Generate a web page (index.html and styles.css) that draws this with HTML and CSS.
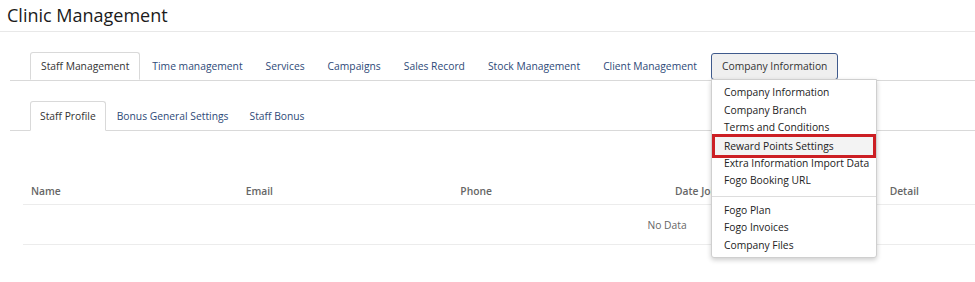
FILE: index.html
```html
<!DOCTYPE html>
<html lang="en">
<head>
  <meta charset="UTF-8">
  <meta name="viewport" content="width=device-width,initial-scale=1">
  <title>Clinic Management</title>
  <link rel="stylesheet" href="styles.css">
</head>
<body>
  <div class="page">
    <h2 class="page-title">Clinic Management</h2>

    <div class="content">
      <!-- Main tabs -->
      <ul class="tabs main-tabs">
        <li class="tab active">Staff Management</li>
        <li class="tab">Time management</li>
        <li class="tab">Services</li>
        <li class="tab">Campaigns</li>
        <li class="tab">Sales Record</li>
        <li class="tab">Stock Management</li>
        <li class="tab">Client Management</li>
        <li class="tab open">
          Company Information
          <ul class="dropdown">
            <li>Company Information</li>
            <li>Company Branch</li>
            <li>Terms and Conditions</li>
            <li class="highlight">Reward Points Settings</li>
            <li>Extra Information Import Data</li>
            <li>Fogo Booking URL</li>
            <li class="divider"></li>
            <li>Fogo Plan</li>
            <li>Fogo Invoices</li>
            <li>Company Files</li>
          </ul>
        </li>
      </ul>

      <!-- Sub tabs -->
      <ul class="tabs sub-tabs">
        <li class="tab active">Staff Profile</li>
        <li class="tab">Bonus General Settings</li>
        <li class="tab">Staff Bonus</li>
      </ul>

      <table class="staff-table">
        <thead>
          <tr>
            <th>Name</th>
            <th>Email</th>
            <th>Phone</th>
            <th>Date Joined</th>
            <th>Detail</th>
            <th></th>
          </tr>
        </thead>
        <tbody>
          <tr>
            <td colspan="6" class="empty">No Data</td>
          </tr>
        </tbody>
      </table>
    </div>
  </div>
</body>
</html>
```

FILE: styles.css
```css
body {
  margin: 0;
  font-family: 'Open Sans', 'Noto Sans', sans-serif;
  font-size: 10.3px;
  font-weight: 500;
  color: #333;
  background: #fff;
}
.page {
  width: 975px;
  height: 282px;
  overflow: hidden;
}
.page-title {
  margin: 0;
  padding: 3px 7px 0;
  height: 28px;
  font-size: 18px;
  font-weight: 500;
  color: #1b1b1b;
  border-bottom: 1px solid #e8e8e8;
}
.content {
  padding: 20px 0 0 10px;
}
.tabs {
  list-style: none;
  margin: 0;
  padding: 0 0 0 20px;
  display: flex;
  border-bottom: 1px solid #d9d9d9;
}
.tab {
  position: relative;
  height: 26px;
  line-height: 26px;
  padding: 0 10px;
  margin-bottom: -1px;
  color: #2e4a78;
  border: 1px solid transparent;
  border-radius: 3px 3px 0 0;
  white-space: nowrap;
  cursor: pointer;
}
.tab + .tab {
  margin-left: 1px;
}
.tab.active {
  color: #333;
  background: #fff;
  border-color: #d9d9d9;
  border-bottom-color: #fff;
}
.tab.open {
  color: #333;
  background: #efefef;
  border: 1px solid #3f5a8c;
  border-radius: 3px;
  height: 25px;
  line-height: 25px;
  margin-top: 1px;
  margin-bottom: 0;
  margin-left: 3px;
}
.sub-tabs {
  margin-top: 20px;
}
.sub-tabs .tab {
  height: 28px;
  line-height: 28px;
  padding: 0 9px;
}
.dropdown {
  position: absolute;
  top: 25px;
  left: -1px;
  width: 164px;
  margin: 0;
  padding: 4px 0 3px;
  list-style: none;
  background: #fff;
  border: 1px solid #cfcfcf;
  border-radius: 0 0 3px 3px;
  box-shadow: 0 2px 5px rgba(0,0,0,0.2);
  z-index: 10;
}
.dropdown li {
  height: 17.5px;
  line-height: 17.5px;
  padding: 0 12px;
  color: #222;
}
.dropdown li.highlight {
  background: #f3f3f3;
  outline: 3px solid #cc1f24;
  outline-offset: -3px;
  height: 24px;
  line-height: 24px;
  margin: -3px 0;
  position: relative;
}
.dropdown li.divider {
  height: 1px;
  margin: 6px 0 5px;
  padding: 0;
  background: #ddd;
}
.staff-table {
  margin: 53px 0 0 13px;
  width: 1288px;
  border-collapse: collapse;
  table-layout: fixed;
}
.staff-table th {
  text-align: left;
  font-weight: 600;
  color: #666;
  padding: 0 8px;
  height: 20px;
  line-height: 14px;
  vertical-align: top;
  border-bottom: 1px solid #ececec;
}
.staff-table td.empty {
  text-align: center;
  color: #666;
  padding: 0;
  height: 39px;
  border-bottom: 1px solid #ececec;
}
```
